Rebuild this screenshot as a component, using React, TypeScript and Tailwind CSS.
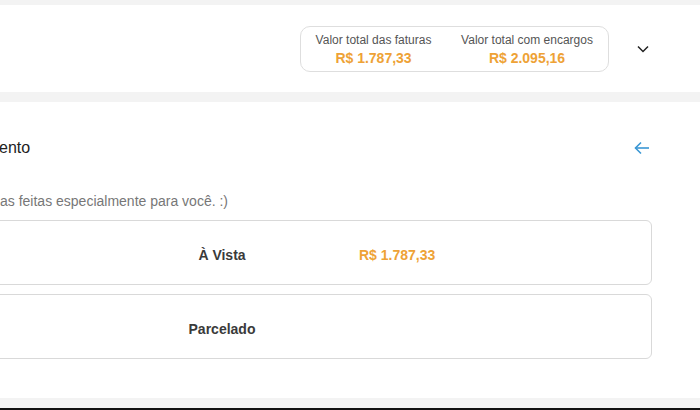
import React from "react";

export default function App() {
  const orange = "text-[#eea236]";
  return (
    <div
      className="w-[700px] h-[410px] bg-[#f3f3f3] flex flex-col overflow-hidden"
      style={{ fontFamily: '"Liberation Sans", Arial, sans-serif' }}
    >
      <div className="h-[5px] shrink-0" />
      {/* Header panel */}
      <div className="h-[87px] shrink-0 bg-white flex items-center justify-end pr-[23px]">
        <div className="w-[309px] h-[46px] border border-[#dedede] rounded-[10px] flex items-center mt-[1px]">
          <div className="w-[146px] flex flex-col items-center leading-none">
            <span className="text-[12px] text-[#555]">Valor total das faturas</span>
            <span className={`text-[14px] font-bold ${orange} mt-[5px]`}>R$ 1.787,33</span>
          </div>
          <div className="w-[163px] flex flex-col items-center leading-none">
            <span className="text-[12px] text-[#555]">Valor total com encargos</span>
            <span className={`text-[14px] font-bold ${orange} mt-[5px]`}>R$ 2.095,16</span>
          </div>
        </div>
        <div className="w-[68px] flex justify-center">
          <svg width="12" height="8" viewBox="0 0 12 8" fill="none">
            <polyline points="1,1.5 6,6.5 11,1.5" stroke="#222" strokeWidth="1.5" />
          </svg>
        </div>
      </div>
      <div className="h-[10px] shrink-0" />
      {/* Main panel */}
      <div className="h-[296px] shrink-0 bg-white flex flex-col">
        <div className="h-[90px] flex items-center justify-between pr-[49px]">
          <span className="text-[16px] text-[#222] leading-none ml-[-1px] mt-[2px]">ento</span>
          <svg width="16" height="14" viewBox="0 0 16 14" fill="none" className="mr-[1px] mt-[2px]">
            <line x1="1.5" y1="7" x2="15" y2="7" stroke="#3a97d4" strokeWidth="1.6" />
            <polyline points="7,1.5 1.5,7 7,12.5" stroke="#3a97d4" strokeWidth="1.6" fill="none" />
          </svg>
        </div>
        <div className="mt-[2px] text-[14px] text-[#777] leading-none">
          as feitas especialmente para você. :)
        </div>
        <div className="flex flex-col gap-[9px] mt-[12px] mr-[48px] ml-[-12px]">
          <div className="h-[65px] border-[1.5px] border-[#d9d9d9] rounded-[6px] flex items-center">
            <div className="w-[466px] text-center text-[14px] font-bold text-[#3a3a3a] mt-[5px]">À Vista</div>
            <div className={`text-[14px] font-bold ${orange} ml-[-96px] mt-[5px]`}>R$ 1.787,33</div>
          </div>
          <div className="h-[65px] border-[1.5px] border-[#d9d9d9] rounded-[6px] flex items-center">
            <div className="w-[466px] text-center text-[14px] font-bold text-[#3a3a3a] mt-[5px]">Parcelado</div>
          </div>
        </div>
      </div>
      <div className="h-[10px] shrink-0" />
      <div className="h-[2px] shrink-0 bg-[#111]" />
    </div>
  );
}
